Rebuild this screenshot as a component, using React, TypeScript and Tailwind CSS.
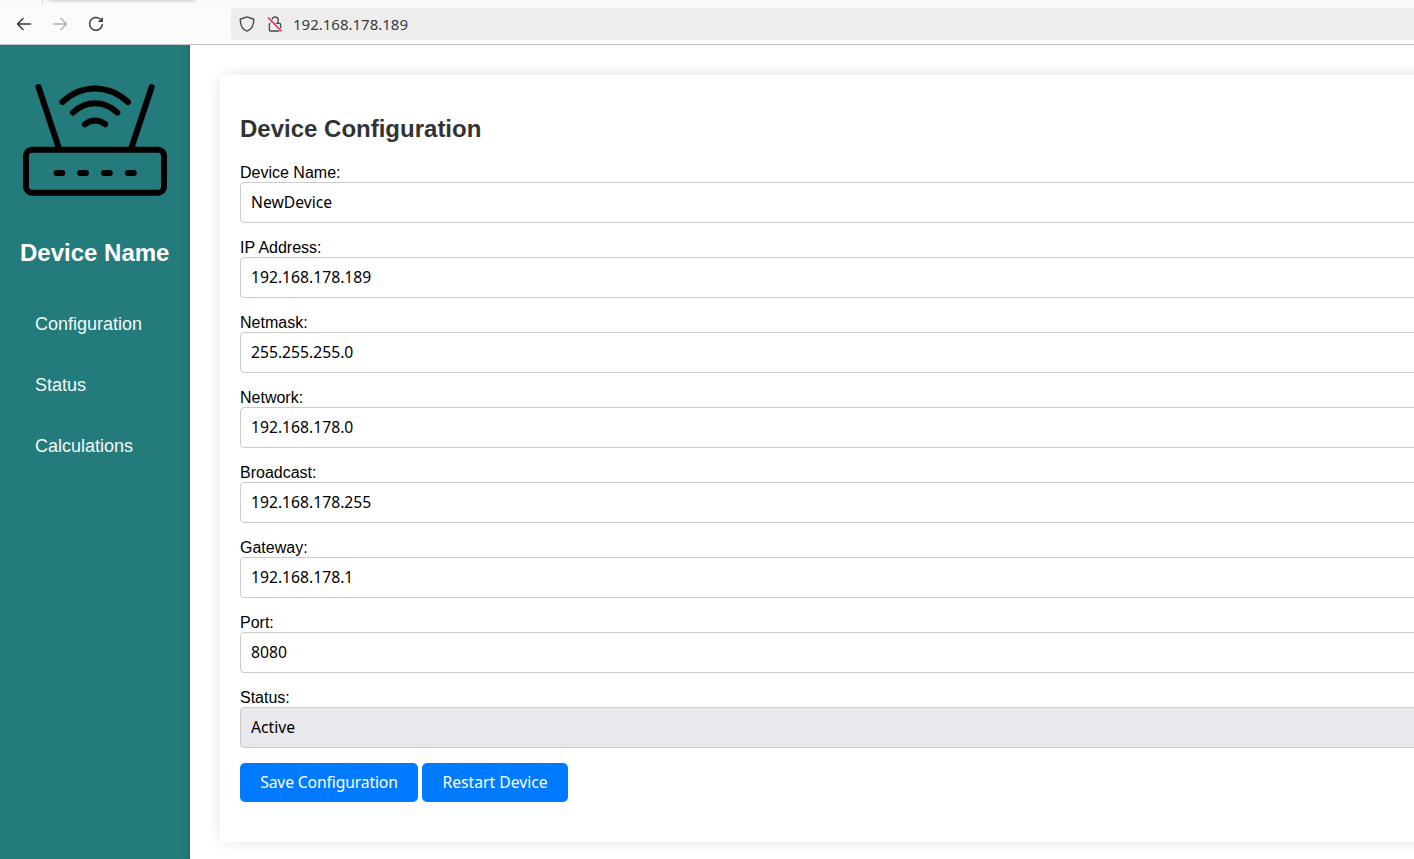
import React from 'react';

type Field = { label: string; value: string; disabled?: boolean };

const fields: Field[] = [
  { label: 'Device Name:', value: 'NewDevice' },
  { label: 'IP Address:', value: '192.168.178.189' },
  { label: 'Netmask:', value: '255.255.255.0' },
  { label: 'Network:', value: '192.168.178.0' },
  { label: 'Broadcast:', value: '192.168.178.255' },
  { label: 'Gateway:', value: '192.168.178.1' },
  { label: 'Port:', value: '8080' },
  { label: 'Status:', value: 'Active', disabled: true },
];

const links = ['Configuration', 'Status', 'Calculations'];

function BrowserBar() {
  return (
    <header className="relative h-[45px] shrink-0 border-b border-[#c4c4c4] bg-[#fbfbfb]">
      <div className="absolute left-0 top-0 h-1 w-full overflow-hidden bg-[#f9f9f9]">
        <div className="ml-[42px] h-1 w-px bg-[#d4d4d4]" />
        <div className="absolute -top-3 left-12 h-3 w-[147px] rounded bg-white shadow-[0_0_4px_rgba(0,0,0,0.3)]" />
      </div>
      <div className="flex h-full items-center pt-1">
        <svg className="ml-4 size-4" viewBox="0 0 16 16" fill="none" stroke="#3b3a40" strokeWidth="1.5" strokeLinecap="round" strokeLinejoin="round">
          <path d="M14.5 8H1.5M7 2.5L1.5 8L7 13.5" />
        </svg>
        <svg className="ml-5 size-4" viewBox="0 0 16 16" fill="none" stroke="#b3b3b5" strokeWidth="1.5" strokeLinecap="round" strokeLinejoin="round">
          <path d="M1.5 8H14.5M9 2.5L14.5 8L9 13.5" />
        </svg>
        <svg className="ml-5 size-4" viewBox="0 0 16 16" fill="none" stroke="#3b3a40" strokeWidth="1.4" strokeLinecap="round">
          <path d="M12.2 3.1A6.4 6.4 0 1 0 14.3 8.4" />
          <path d="M14.9 1V6H9.900Z" fill="#3b3a40" stroke="none" />
        </svg>
        <div className="ml-[127px] flex h-8 flex-1 items-center rounded-l bg-[#ededed] pl-2">
          <svg className="size-4" viewBox="0 0 16 16" fill="none" stroke="#4b4a50" strokeWidth="1.4" strokeLinejoin="round">
            <path d="M8 .9L14.2 3C14.7 3.2 14.8 3.5 14.8 4C14.6 9.3 12.2 13.7 8 15.2C3.800 13.700 1.400 9.300 1.200 4C1.200 3.500 1.300 3.200 1.800 3Z" />
          </svg>
          <svg className="ml-3 size-4" viewBox="0 0 16 16" fill="none" stroke="#4b4a50" strokeWidth="1.4" strokeLinejoin="round">
            <path d="M4.800 7V4.200A3.200 3.200 0 0 1 11.200 4.200V7M6 7.400H12.500Q13.600 7.400 13.600 8.500V13.500M12.500 15H3.500Q2.400 15 2.400 13.900V8.500Q2.400 7.600 3.300 7.400" />
            <path d="M1.200 1.600L14.700 15.100" stroke="#ededed" strokeWidth="2.400" />
            <path d="M1 1.600L14.500 15.300" stroke="#f0204f" strokeWidth="1.400" />
          </svg>
          <span className="ml-2.5 font-['Noto_Sans',sans-serif] text-[15px] leading-5 text-[#3b3a40]">192.168.178.189</span>
        </div>
      </div>
    </header>
  );
}

function RouterIcon() {
  return (
    <svg className="h-[150px] w-[150px]" viewBox="20 65 150 150" fill="none" stroke="#000" strokeWidth="6" strokeLinecap="round" strokeLinejoin="round">
      <rect x="26" y="149.700" width="138" height="43" rx="6" />
      <path d="M38.500 87L58.500 147M151.700 87L131.700 147" />
      <path d="M62.500 102Q77 88.500 95 88.500T128 102M73 112.500Q83 103.300 95 103.300T117.300 112.500M84.800 124.300Q95 116.800 105.300 124.300" />
      <path d="M56.500 173H62.300M80.200 173H86M104 173H109.800M128 173H133.800" />
    </svg>
  );
}

function Sidebar() {
  return (
    <aside className="w-[190px] shrink-0 bg-[#247b7b] px-5 pt-5 text-white shadow-[inset_-8px_0_8px_-8px_rgba(0,0,0,0.2)]">
      <RouterIcon />
      <h2 className="mt-6 whitespace-nowrap text-2xl leading-7 font-bold">Device Name</h2>
      <nav className="mt-[26px] flex flex-col">
        {links.map((link) => (
          <a key={link} href="#" className="flex h-[61px] items-center pl-[15px] text-lg text-[#f2f8f8]">
            {link}
          </a>
        ))}
      </nav>
    </aside>
  );
}

function ConfigurationForm() {
  return (
    <form className="h-[767px] w-[1300px] rounded-[5px] bg-white px-5 pt-10 shadow-[0_0_15px_rgba(0,0,0,0.1)]">
      <h1 className="text-2xl leading-7 font-bold text-[#333]">Device Configuration</h1>
      <div className="mt-[21px] flex flex-col gap-4">
        {fields.map(({ label, value, disabled }) => (
          <label key={label} className="block text-base leading-[18px] text-black">
            {label}
            <input
              defaultValue={value}
              disabled={disabled}
              className="block h-[41px] w-full rounded border border-[#ccc] bg-white px-2.5 pb-0.5 font-['Noto_Sans',sans-serif] text-[15.7px] text-black disabled:bg-[#e8e8ed]"
            />
          </label>
        ))}
      </div>
      <div className="mt-[15px] flex gap-1 font-['Noto_Sans',sans-serif] text-[15.7px] whitespace-nowrap text-white">
        <button type="button" className="h-[39px] w-[178px] rounded-[5px] bg-[#007bff] tracking-[-0.14px]">Save Configuration</button>
        <button type="button" className="h-[39px] w-[146px] rounded-[5px] bg-[#007bff]">Restart Device</button>
      </div>
    </form>
  );
}

export default function App() {
  return (
    <div className="flex h-screen flex-col overflow-hidden bg-white font-['Liberation_Sans',sans-serif]">
      <BrowserBar />
      <div className="flex min-h-0 flex-1">
        <Sidebar />
        <main className="min-w-0 flex-1 overflow-hidden pt-[30px] pl-[30px]">
          <ConfigurationForm />
        </main>
      </div>
    </div>
  );
}
